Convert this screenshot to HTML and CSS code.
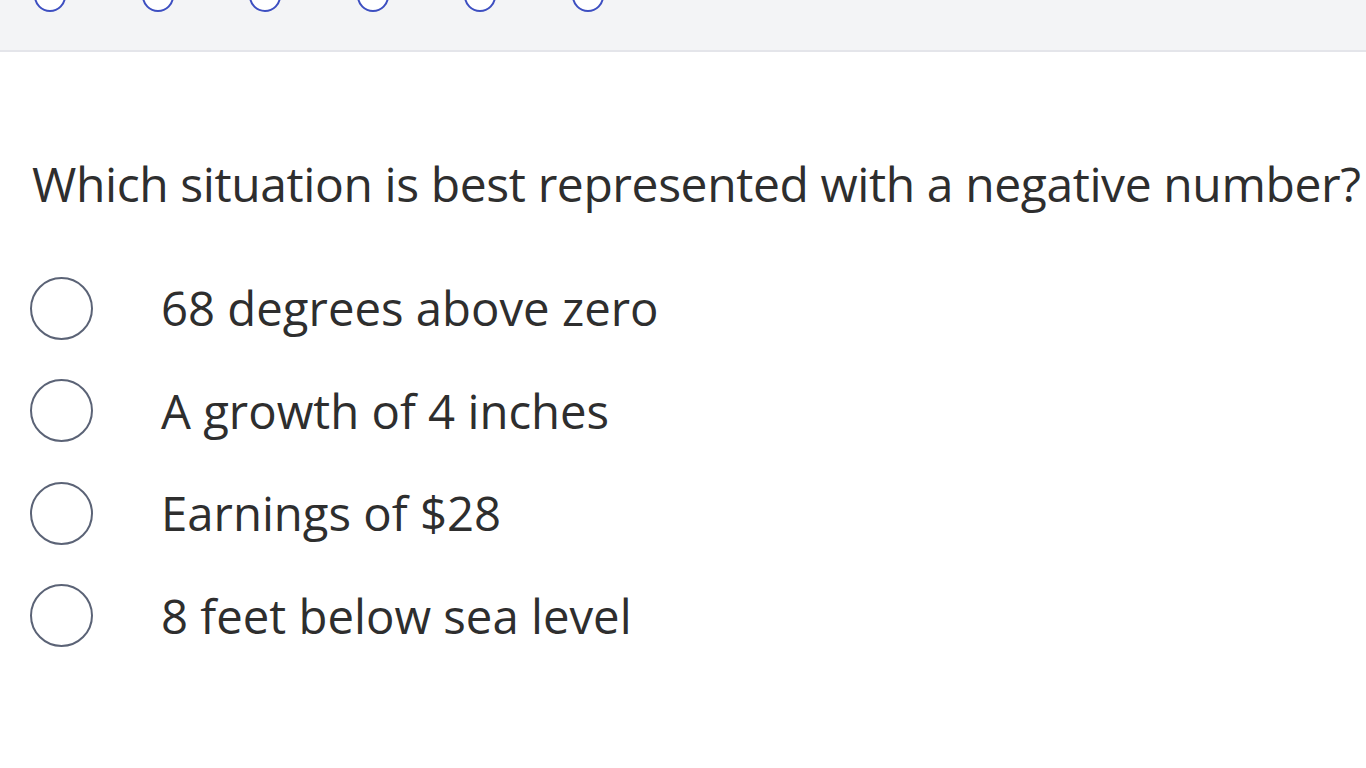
FILE: index.html
```html
<!DOCTYPE html>
<html lang="en">
<head>
<meta charset="utf-8">
<title>Question</title>
<link rel="stylesheet" href="styles.css">
</head>
<body>
<header class="topbar">
  <div class="dots">
    <span class="dot"></span>
    <span class="dot"></span>
    <span class="dot"></span>
    <span class="dot"></span>
    <span class="dot"></span>
    <span class="dot"></span>
  </div>
</header>
<main class="quiz">
  <h1 class="question">Which situation is best represented with a negative number?</h1>
  <ul class="options">
    <li class="option"><span class="radio"></span><span class="label">68 degrees above zero</span></li>
    <li class="option"><span class="radio"></span><span class="label">A growth of 4 inches</span></li>
    <li class="option"><span class="radio"></span><span class="label">Earnings of $28</span></li>
    <li class="option"><span class="radio"></span><span class="label">8 feet below sea level</span></li>
  </ul>
</main>
</body>
</html>
```
FILE: styles.css
```css
html, body {
  margin: 0;
  padding: 0;
  background: #ffffff;
  font-family: "Open Sans", "Liberation Sans", sans-serif;
  color: #2e2e2e;
  overflow: hidden;
}

.topbar {
  height: 50px;
  background: #f3f4f6;
  border-bottom: 2px solid #e4e5ea;
  overflow: hidden;
}

.dots {
  display: flex;
  gap: 75.5px;
  padding-left: 34px;
  margin-top: -20px;
}

.dot {
  width: 28px;
  height: 28px;
  border: 2px solid #3d4fc1;
  border-radius: 50%;
  background: #fff;
  flex: none;
}

.quiz {
  padding: 0 0 0 32px;
}

.question {
  margin: 98px 0 0 0;
  font-size: 48px;
  font-weight: 400;
  line-height: 68px;
  white-space: nowrap;
  letter-spacing: -0.4px;
}

.options {
  list-style: none;
  margin: 39px 0 0 -2px;
  padding: 0;
}

.option {
  display: flex;
  align-items: center;
  height: 102.5px;
}

.radio {
  flex: none;
  width: 59px;
  height: 59px;
  border: 2px solid #5b6376;
  border-radius: 50%;
  box-sizing: content-box;
  margin-right: 68px;
}

.label {
  font-size: 47.3px;
  line-height: 60px;
}
```
